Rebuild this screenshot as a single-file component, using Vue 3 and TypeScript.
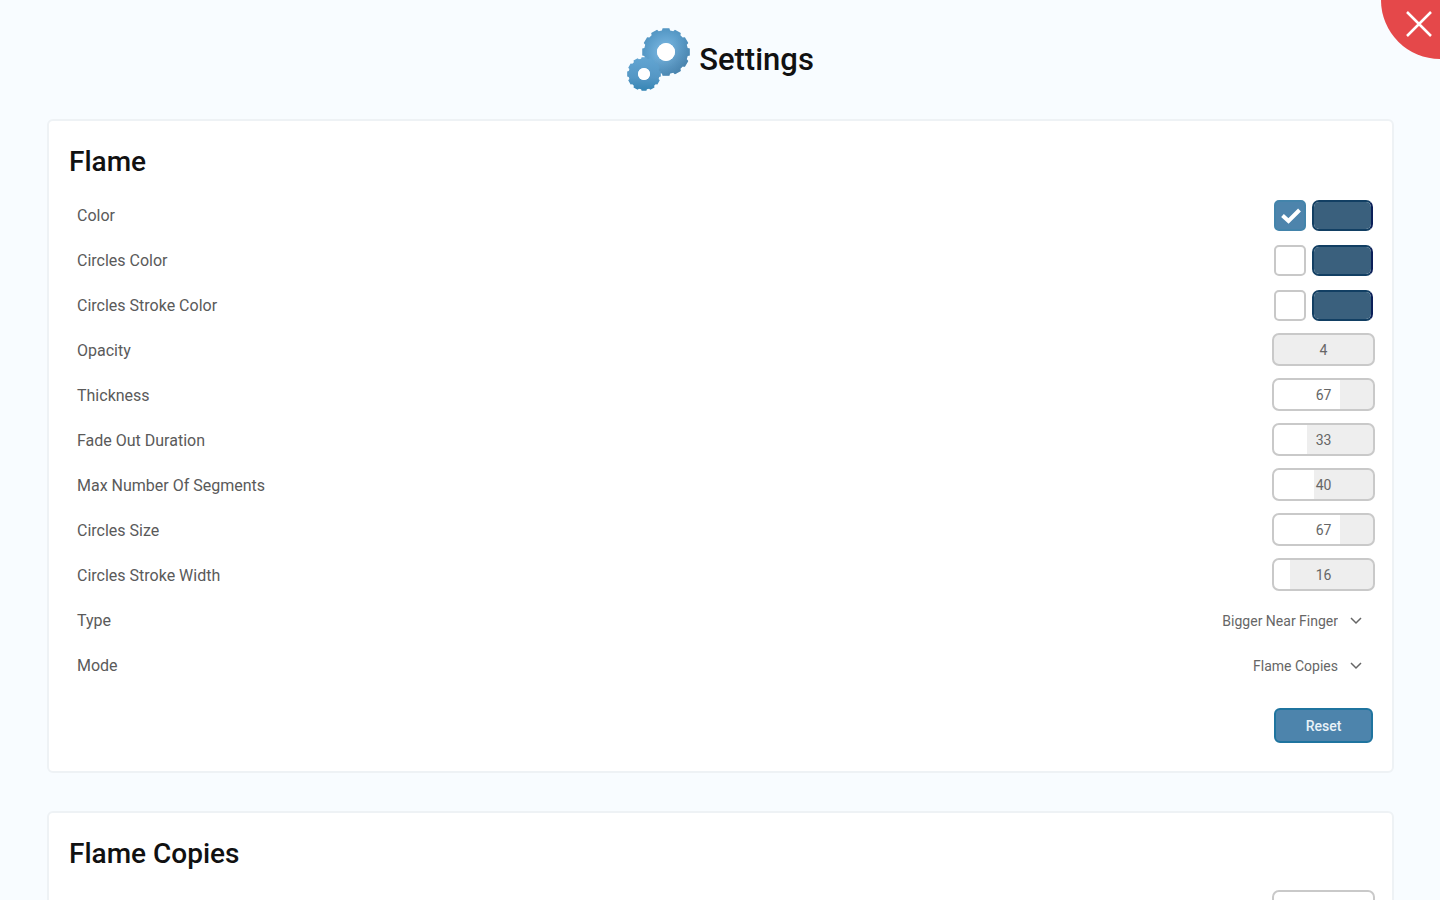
<script setup lang="ts">
import { reactive } from 'vue'

interface ColorRow { id: string; label: string; enabled: boolean; color: string }
interface RangeRow { id: string; label: string; value: number }
interface SelectRow { id: string; label: string; value: string; options: string[] }

const colors = reactive<ColorRow[]>([
  { id: 'color', label: 'Color', enabled: true, color: '#3a607d' },
  { id: 'circles-color', label: 'Circles Color', enabled: false, color: '#3a607d' },
  { id: 'stroke-color', label: 'Circles Stroke Color', enabled: false, color: '#3a607d' },
])

const ranges = reactive<RangeRow[]>([
  { id: 'opacity', label: 'Opacity', value: 4 },
  { id: 'thickness', label: 'Thickness', value: 67 },
  { id: 'fade', label: 'Fade Out Duration', value: 33 },
  { id: 'segments', label: 'Max Number Of Segments', value: 40 },
  { id: 'size', label: 'Circles Size', value: 67 },
  { id: 'stroke-width', label: 'Circles Stroke Width', value: 16 },
])

const selects = reactive<SelectRow[]>([
  { id: 'type', label: 'Type', value: 'Bigger Near Finger', options: ['Bigger Near Finger'] },
  { id: 'mode', label: 'Mode', value: 'Flame Copies', options: ['Flame Copies'] },
])

const copies = reactive({ value: 100 })

function fill(value: number) {
  const stop = value < 5 ? 0 : value
  return { background: `linear-gradient(to right, #fff ${stop}%, #eee ${stop}%)` }
}

// Toothed outline with a round hole; drawn with the even-odd rule.
function gear(cx: number, cy: number, outer: number, inner: number, hole: number, teeth: number) {
  const step = (Math.PI * 2) / teeth
  const points: string[] = []
  for (let i = 0; i < teeth; i++) {
    const a = i * step
    const corners: [number, number][] = [[inner, -0.36], [outer, -0.27], [outer, 0.27], [inner, 0.36]]
    for (const [r, t] of corners) {
      points.push(`${(cx + r * Math.cos(a + t * step)).toFixed(2)} ${(cy + r * Math.sin(a + t * step)).toFixed(2)}`)
    }
  }
  return `M${points.join('L')}Z M${cx - hole} ${cy}a${hole} ${hole} 0 1 0 ${hole * 2} 0a${hole} ${hole} 0 1 0 ${-hole * 2} 0Z`
}

const bigGear = gear(39, 24, 24, 22, 9, 12)
const smallGear = gear(17, 46, 17, 15.5, 6, 12)
</script>

<template>
  <main class="page">
    <header class="header">
      <svg class="gears" viewBox="0 0 64 64" aria-hidden="true">
        <defs>
          <radialGradient id="big" gradientUnits="userSpaceOnUse" cx="39" cy="24" r="24">
            <stop offset="0.4" stop-color="#6eadd8" />
            <stop offset="0.75" stop-color="#5d9fcc" />
            <stop offset="1" stop-color="#5295c2" />
          </radialGradient>
          <linearGradient id="shade" x1="0" y1="0" x2="1" y2="1">
            <stop offset="0.45" stop-color="#41739a" stop-opacity="0" />
            <stop offset="1" stop-color="#41739a" stop-opacity="0.7" />
          </linearGradient>
          <linearGradient id="small" x1="0" y1="0" x2="0" y2="1">
            <stop offset="0" stop-color="#62a5d2" />
            <stop offset="0.6" stop-color="#5597c5" />
            <stop offset="1" stop-color="#3585b4" />
          </linearGradient>
        </defs>
        <path :d="bigGear" fill="url(#big)" fill-rule="evenodd" />
        <path :d="bigGear" fill="url(#shade)" fill-rule="evenodd" />
        <path :d="smallGear" fill="url(#small)" fill-rule="evenodd" />
        <circle cx="39" cy="24" r="9" fill="#fff" />
        <circle cx="17" cy="46" r="6" fill="#fff" />
      </svg>
      <h1>Settings</h1>
    </header>
    <button class="close" type="button" aria-label="Close">
      <svg viewBox="0 0 26 26" aria-hidden="true"><path d="M1 1L25 25M25 1L1 25" /></svg>
    </button>

    <section class="card">
      <h2>Flame</h2>
      <div v-for="row in colors" :key="row.id" class="row">
        <label :for="row.id">{{ row.label }}</label>
        <div class="color-controls">
          <span class="check">
            <input :id="row.id" v-model="row.enabled" type="checkbox" />
            <svg v-if="row.enabled" viewBox="0 0 20 16" aria-hidden="true"><path d="M1.5 7.5L7.5 13L18.5 2" /></svg>
          </span>
          <input v-model="row.color" class="swatch" type="color" :aria-label="row.label + ' value'" />
        </div>
      </div>
      <div v-for="row in ranges" :key="row.id" class="row">
        <label :for="row.id">{{ row.label }}</label>
        <div class="slider">
          <input :id="row.id" v-model.number="row.value" type="range" min="0" max="100" :style="fill(row.value)" />
          <output :for="row.id">{{ row.value }}</output>
        </div>
      </div>
      <div v-for="row in selects" :key="row.id" class="row">
        <label :for="row.id">{{ row.label }}</label>
        <div class="dropdown">
          <select :id="row.id" v-model="row.value">
            <option v-for="option in row.options" :key="option">{{ option }}</option>
          </select>
          <svg viewBox="0 0 12 8" aria-hidden="true"><path d="M1 1L6 6L11 1" /></svg>
        </div>
      </div>
      <button class="reset" type="button">Reset</button>
    </section>

    <section class="card">
      <h2>Flame Copies</h2>
      <div class="row">
        <span></span>
        <div class="slider">
          <input v-model.number="copies.value" type="range" min="0" max="100" aria-label="Flame Copies" :style="fill(copies.value)" />
        </div>
      </div>
    </section>
  </main>
</template>

<style>
body {
  margin: 0;
}
</style>

<style scoped>
* {
  box-sizing: border-box;
}
.page {
  position: relative;
  height: 100vh;
  overflow: hidden;
  padding: 0 46px 0 47px;
  background: #f8fcff;
  color: #111;
  font-family: Roboto, "Liberation Sans", sans-serif;
}
.header {
  display: flex;
  align-items: center;
  justify-content: center;
  gap: 8px;
  height: 119px;
}
.gears {
  width: 64px;
  height: 64px;
}
h1 {
  margin: 0;
  font-size: 31px;
  font-weight: 500;
  line-height: 40px;
}
h2 {
  margin: 0;
  font-size: 28px;
  font-weight: 500;
  line-height: 40px;
}
.close {
  position: absolute;
  top: 0;
  right: 0;
  width: 59px;
  height: 59px;
  padding: 11px 8px 0 25px;
  border: 0;
  border-radius: 0 0 0 100%;
  background: #e5484a;
}
.close svg {
  display: block;
  width: 26px;
  height: 26px;
  margin-bottom: 22px;
  fill: none;
  stroke: #fff;
  stroke-width: 2.5;
}
.card {
  margin-bottom: 38px;
  padding: 21px 19px 28px 20px;
  border: 2px solid #eef2f5;
  border-radius: 6px;
  background: #fff;
}
.row {
  display: flex;
  align-items: center;
  justify-content: space-between;
  height: 45px;
}
h2 + .row {
  margin-top: 11px;
}
label {
  padding-left: 8px;
  color: #5a5a5a;
  font-size: 16px;
  line-height: 24px;
}
.color-controls {
  display: flex;
  gap: 6px;
  margin-bottom: 1px;
}
.check {
  position: relative;
  display: flex;
}
.check input {
  appearance: none;
  width: 32px;
  height: 31px;
  margin: 0;
  border: 2px solid #c8c8c8;
  border-radius: 5px;
  background: #fff;
}
.check input:checked {
  border-color: #4384ab;
  background: #4d84ac;
}
.check svg {
  position: absolute;
  top: 8px;
  left: 7px;
  width: 20px;
  height: 16px;
  fill: none;
  stroke: #fff;
  stroke-width: 4;
  pointer-events: none;
}
.swatch {
  appearance: none;
  width: 61px;
  height: 31px;
  padding: 0;
  border: 2px solid #123f63;
  border-right-color: #0b1f59;
  border-radius: 7px;
  background: #3a607d;
  overflow: hidden;
}
.swatch::-webkit-color-swatch-wrapper {
  padding: 0;
}
.swatch::-webkit-color-swatch {
  border: 0;
  border-radius: 0;
}
.slider {
  position: relative;
  width: 103px;
  height: 33px;
  margin: 0 -2px 2px 0;
}
.slider input {
  appearance: none;
  display: block;
  width: 100%;
  height: 33px;
  margin: 0;
  border: 2px solid #c9c9c9;
  border-radius: 7px;
}
.slider input::-webkit-slider-thumb {
  appearance: none;
  width: 1px;
  height: 29px;
}
.slider output {
  position: absolute;
  inset: 0;
  color: #666;
  font-size: 14px;
  line-height: 34px;
  text-align: center;
  pointer-events: none;
}
.dropdown {
  position: relative;
  display: flex;
  align-items: center;
}
.dropdown select {
  appearance: none;
  height: 32px;
  padding: 0 35px 0 8px;
  border: 0;
  background: transparent;
  color: #666;
  font-family: inherit;
  font-size: 14px;
  text-align-last: right;
}
.dropdown svg {
  position: absolute;
  right: 11px;
  width: 12px;
  height: 8px;
  fill: none;
  stroke: #666;
  stroke-width: 1.5;
  pointer-events: none;
}
.reset {
  display: block;
  width: 99px;
  height: 35px;
  margin: 20px 0 0 auto;
  border: 2px solid #1f749f;
  border-radius: 6px;
  background: #4d84ac;
  color: #e8f2f8;
  font-family: inherit;
  font-size: 14px;
  font-weight: 500;
}
</style>
